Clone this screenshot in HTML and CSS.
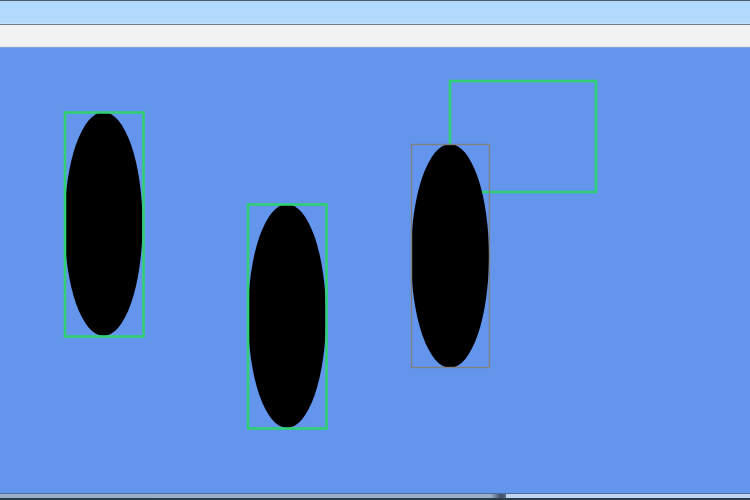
FILE: index.html
```html
<!DOCTYPE html>
<html>
<head>
<meta charset="utf-8">
<link rel="stylesheet" href="styles.css">
</head>
<body>
<div class="window">
  <div class="titlebar"></div>
  <div class="toolbar"></div>
  <div class="canvas">
    <svg class="scene" width="750" height="445" viewBox="0 48 750 445">
      <rect class="box-green" x="450" y="81" width="146" height="111"/>
      <ellipse class="blob" cx="103.5" cy="224" rx="39" ry="112"/>
      <ellipse class="blob" cx="287" cy="316" rx="39" ry="112"/>
      <ellipse class="blob" cx="450" cy="256" rx="39" ry="112"/>
      <rect class="box-green" x="65" y="112.5" width="78.5" height="224"/>
      <rect class="box-green" x="248" y="204.5" width="78.5" height="224"/>
      <rect class="box-gray" x="411.5" y="144.5" width="78" height="223"/>
    </svg>
  </div>
  <div class="scrollbar">
    <div class="thumb"></div>
    <div class="track"></div>
  </div>
</div>
</body>
</html>
```
FILE: styles.css
```css
html, body {
  margin: 0;
  padding: 0;
  width: 750px;
  height: 500px;
  overflow: hidden;
  font-family: "Liberation Sans", Arial, sans-serif;
}
.window {
  display: flex;
  flex-direction: column;
  width: 750px;
  height: 500px;
}
.titlebar {
  height: 22px;
  border-top: 1px solid #4b5a6b;
  background: #b3d9fd;
  border-bottom: 1px solid #c4e0fb;
}
.toolbar {
  height: 21px;
  border-top: 1px solid #6a7b8e;
  background: #f2f2f3;
  border-bottom: 1px solid #efe3e6;
}
.canvas {
  flex: 1;
  background: #6495ed;
  border-top: 1px solid #7ea4e6;
  overflow: hidden;
  display: flex;
}
.scene {
  display: block;
}
.blob {
  fill: #000;
}
.box-green {
  fill: none;
  stroke: #30d074;
  stroke-width: 2.6;
}
.box-gray {
  fill: none;
  stroke: #7f8080;
  stroke-width: 1.4;
}
.scrollbar {
  height: 4px;
  border-top: 1px solid #4f6d9c;
  border-bottom: 2px solid #2b3b48;
  display: flex;
}
.thumb {
  width: 506px;
  background: linear-gradient(to right, #98adc8 0%, #9aafca 97%, #3f4f66 99%, #5a6c84 100%);
}
.track {
  flex: 1;
  background: #bed6f1;
}
```
